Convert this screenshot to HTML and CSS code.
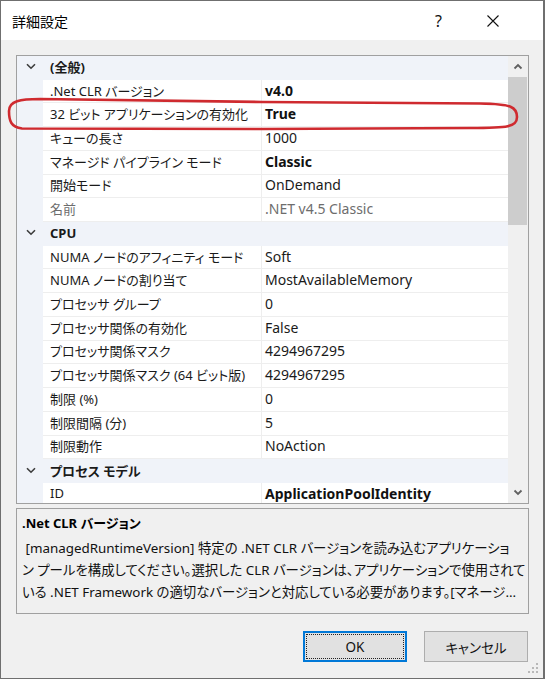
FILE: index.html
```html
<!DOCTYPE html>
<html lang="ja">
<head>
<meta charset="utf-8">
<title>詳細設定</title>
<link rel="stylesheet" href="styles.css">
</head>
<body>
<div class="window">
  <div class="titlebar">
    <span class="title">詳細設定</span>
    <span class="help">?</span>
    <span class="close"><svg width="12" height="12" viewBox="0 0 12 12"><path d="M0.5 0.5 L11.5 11.5 M11.5 0.5 L0.5 11.5" stroke="#111" stroke-width="1.1" fill="none"/></svg></span>
  </div>
  <div class="body">
    <div class="grid">
      <div class="rows">
        <div class="row cat"><span class="chev"><svg width="10" height="7" viewBox="0 0 10 7"><path d="M1 1.2 L5 5.2 L9 1.2" stroke="#3c3c3c" stroke-width="1.6" fill="none"/></svg></span><span class="cat-name">(全般)</span></div>
        <div class="row"><span class="gut"></span><span class="name">.Net CLR バージョン</span><span class="val b">v4.0</span></div>
        <div class="row"><span class="gut"></span><span class="name">32 ビット アプリケーションの有効化</span><span class="val b">True</span></div>
        <div class="row"><span class="gut"></span><span class="name">キューの長さ</span><span class="val">1000</span></div>
        <div class="row"><span class="gut"></span><span class="name">マネージド パイプライン モード</span><span class="val b">Classic</span></div>
        <div class="row"><span class="gut"></span><span class="name">開始モード</span><span class="val">OnDemand</span></div>
        <div class="row dis"><span class="gut"></span><span class="name">名前</span><span class="val">.NET v4.5 Classic</span></div>
        <div class="row cat"><span class="chev"><svg width="10" height="7" viewBox="0 0 10 7"><path d="M1 1.2 L5 5.2 L9 1.2" stroke="#3c3c3c" stroke-width="1.6" fill="none"/></svg></span><span class="cat-name">CPU</span></div>
        <div class="row"><span class="gut"></span><span class="name">NUMA ノードのアフィニティ モード</span><span class="val">Soft</span></div>
        <div class="row"><span class="gut"></span><span class="name">NUMA ノードの割り当て</span><span class="val">MostAvailableMemory</span></div>
        <div class="row"><span class="gut"></span><span class="name">プロセッサ グループ</span><span class="val">0</span></div>
        <div class="row"><span class="gut"></span><span class="name">プロセッサ関係の有効化</span><span class="val">False</span></div>
        <div class="row"><span class="gut"></span><span class="name">プロセッサ関係マスク</span><span class="val">4294967295</span></div>
        <div class="row"><span class="gut"></span><span class="name">プロセッサ関係マスク (64 ビット版)</span><span class="val">4294967295</span></div>
        <div class="row"><span class="gut"></span><span class="name">制限 (%)</span><span class="val">0</span></div>
        <div class="row"><span class="gut"></span><span class="name">制限間隔 (分)</span><span class="val">5</span></div>
        <div class="row"><span class="gut"></span><span class="name">制限動作</span><span class="val">NoAction</span></div>
        <div class="row cat"><span class="chev"><svg width="10" height="7" viewBox="0 0 10 7"><path d="M1 1.2 L5 5.2 L9 1.2" stroke="#3c3c3c" stroke-width="1.6" fill="none"/></svg></span><span class="cat-name">プロセス モデル</span></div>
        <div class="row"><span class="gut"></span><span class="name">ID</span><span class="val b">ApplicationPoolIdentity</span></div>
      </div>
      <div class="scrollbar">
        <div class="sb-btn"><svg width="10" height="7" viewBox="0 0 10 7"><path d="M1.5 5.5 L5 2 L8.5 5.5" stroke="#606060" stroke-width="1.8" fill="none"/></svg></div>
        <div class="sb-track"><div class="sb-thumb"></div></div>
        <div class="sb-btn"><svg width="10" height="7" viewBox="0 0 10 7"><path d="M1.5 1.5 L5 5 L8.5 1.5" stroke="#606060" stroke-width="1.8" fill="none"/></svg></div>
      </div>
    </div>
    <div class="desc">
      <div class="desc-title">.Net CLR バージョン</div>
      <div class="desc-line">&nbsp;[managedRuntimeVersion] 特定の .NET CLR バージョンを読み込むアプリケーショ</div>
      <div class="desc-line">ン プールを構成してください。選択した CLR バージョンは、アプリケーションで使用されて</div>
      <div class="desc-line">いる .NET Framework の適切なバージョンと対応している必要があります。[マネージ...</div>
    </div>
    <div class="buttons">
      <div class="btn default"><span class="focus">OK</span></div>
      <div class="btn">キャンセル</div>
    </div>
  </div>
  <svg class="grip" width="12" height="12" viewBox="0 0 12 12">
    <rect x="9" y="1" width="2" height="2" fill="#b8b8b8"/>
    <rect x="5" y="5" width="2" height="2" fill="#b8b8b8"/>
    <rect x="9" y="5" width="2" height="2" fill="#b8b8b8"/>
    <rect x="1" y="9" width="2" height="2" fill="#b8b8b8"/>
    <rect x="5" y="9" width="2" height="2" fill="#b8b8b8"/>
    <rect x="9" y="9" width="2" height="2" fill="#b8b8b8"/>
  </svg>
  <svg class="annot" width="545" height="160" viewBox="0 0 545 160">
    <path d="M40 92 C20 92 9 94 9 104 C9 114 11 120 22 121.5 L262 122 L470 121 C508 121 517 120 517 110 C517 100 512 97 480 96.5 L262 95 L40 92 Z" stroke="#cf2a2f" stroke-width="2.6" fill="none" stroke-linejoin="round"/>
  </svg>
</div>
</body>
</html>
```

FILE: styles.css
```css
* { box-sizing: border-box; }
html, body { margin: 0; padding: 0; background: #ffffff; }
body {
  font-family: "Noto Sans", "Noto Sans CJK JP", sans-serif;
  font-feature-settings: "palt";
  color: #000;
}
.window {
  position: relative;
  width: 545px;
  height: 679px;
  border: 1px solid #6f6f6f;
  border-right-width: 2px;
  background: #f0f0f0;
  display: flex;
  flex-direction: column;
  overflow: hidden;
}
.titlebar {
  height: 39px;
  background: #ffffff;
  display: flex;
  align-items: center;
  padding-left: 11px;
  flex-shrink: 0;
}
.title { font-size: 14px; flex: 1; }
.help { font-size: 16px; width: 52px; text-align: left; color: #111; }
.close { width: 56px; display: flex; align-items: center; }
.body {
  flex: 1;
  padding: 15px 14px 0 15px;
  display: flex;
  flex-direction: column;
}
.grid {
  height: 449px;
  border: 1px solid #a0a0a0;
  background: #ffffff;
  display: flex;
  flex-shrink: 0;
}
.rows {
  flex: 1;
  height: 447px;
  overflow: hidden;
  font-size: 13px;
  padding-top: 0;
}
.row {
  height: 23.72px;
  display: flex;
  align-items: stretch;
}
.gut { width: 26px; flex-shrink: 0; background: #f0f3f9; }
.name {
  width: 219px;
  flex-shrink: 0;
  padding-left: 7px;
  padding-bottom: 2px;
  display: flex;
  align-items: center;
  border-bottom: 1px solid #eeeeee;
  border-right: 1px solid #eeeeee;
  white-space: nowrap;
  overflow: hidden;
  color: #1a1a1a;
}
.val {
  flex: 1;
  padding-left: 3px;
  padding-bottom: 2px;
  display: flex;
  align-items: center;
  border-bottom: 1px solid #eeeeee;
  white-space: nowrap;
  color: #1a1a1a;
  font-size: 14px;
}
.val.b { font-weight: 700; color: #111; }
.dis .name, .dis .val { color: #6d6d6d; }
.cat { background: #f0f3f9; align-items: center; }
.chev { width: 26px; display: flex; justify-content: center; padding-left: 1px; padding-bottom: 2px; }
.cat-name { padding-left: 7px; padding-bottom: 2px; font-weight: 700; color: #1a1a1a; }
.scrollbar {
  width: 20px;
  background: #f0f0f0;
  display: flex;
  flex-direction: column;
}
.sb-btn {
  height: 21px;
  display: flex;
  align-items: center;
  justify-content: center;
}
.sb-track { flex: 1; padding-right: 1px; }
.sb-thumb { height: 148px; background: #cdcdcd; }
.desc {
  margin-top: 4px;
  height: 106px;
  border: 1px solid #a0a0a0;
  padding: 4px 0 0 5px;
  font-size: 13.4px;
  flex-shrink: 0;
  overflow: hidden;
}
.desc-title { font-weight: 700; font-size: 13px; height: 24px; line-height: 20px; }
.desc-line { height: 22px; line-height: 22px; white-space: nowrap; color: #111; }
.buttons {
  margin-top: 17px;
  display: flex;
  justify-content: flex-end;
  gap: 17px;
  padding-right: 1px;
}
.btn {
  width: 104px;
  height: 31px;
  background: #e1e1e1;
  border: 1px solid #adadad;
  display: flex;
  align-items: center;
  justify-content: center;
  font-size: 13.5px;
  color: #111;
}
.btn.default { border: 2px solid #0078d7; padding: 1px; }
.focus {
  width: 100%;
  height: 100%;
  border: 1px dotted #222;
  display: flex;
  align-items: center;
  justify-content: center;
}
.grip { position: absolute; right: 4px; bottom: 4px; }
.annot { position: absolute; left: -1px; top: 6px; pointer-events: none; }
```
